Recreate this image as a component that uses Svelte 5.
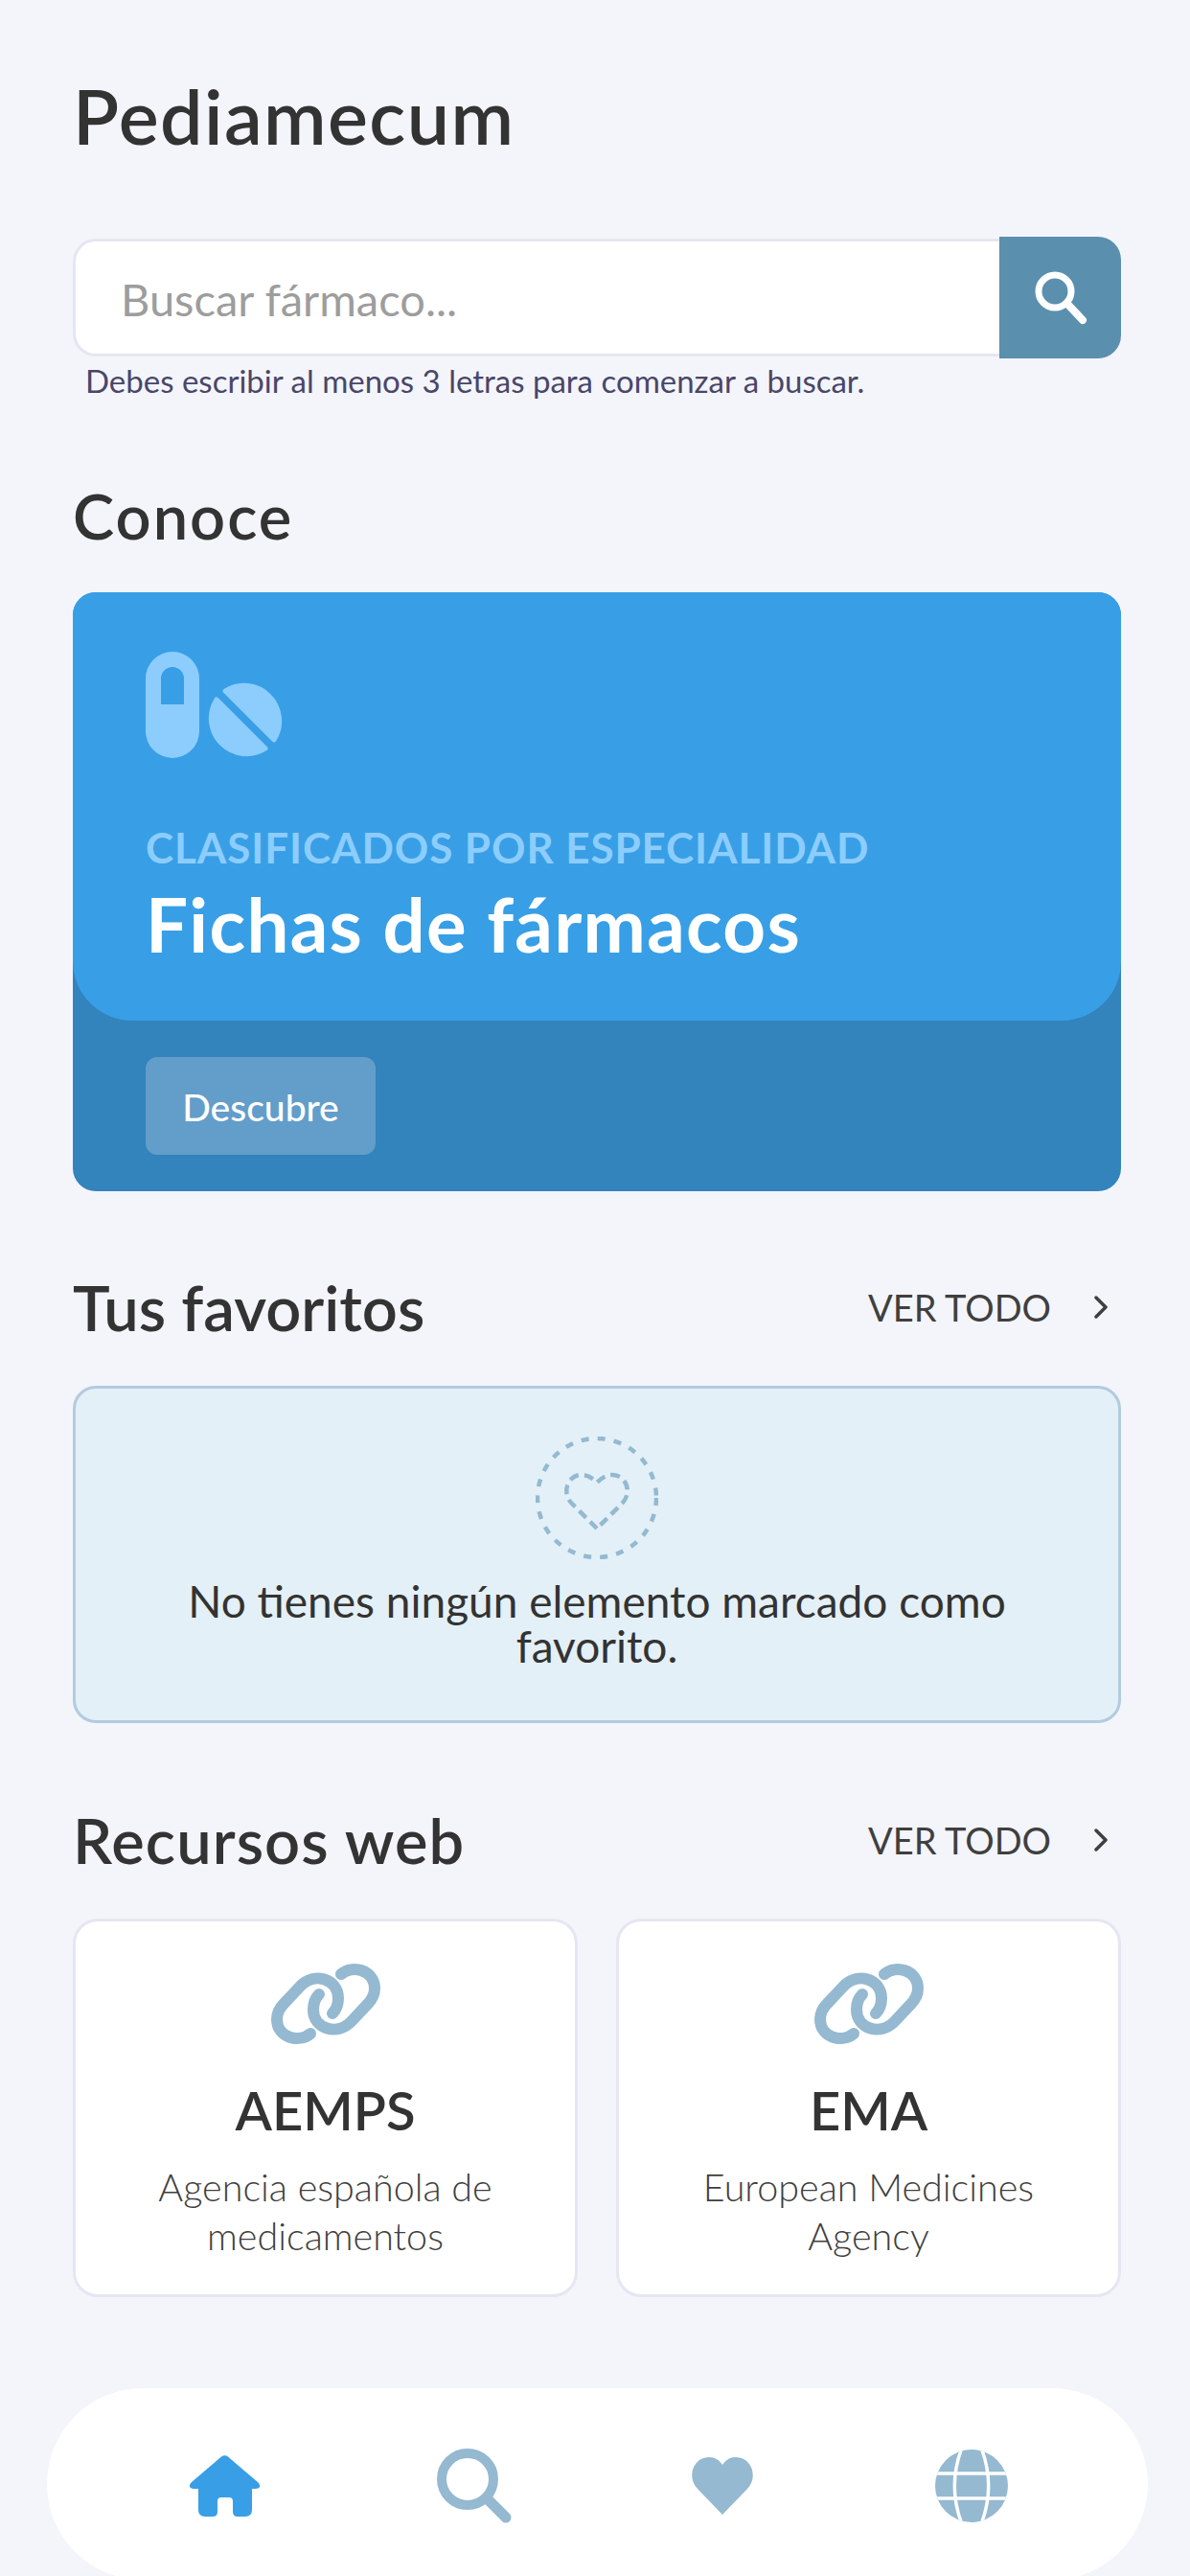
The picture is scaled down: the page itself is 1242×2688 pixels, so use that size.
<script>
    const resources = [
        { name: 'AEMPS', lines: ['Agencia española de', 'medicamentos'] },
        { name: 'EMA', lines: ['European Medicines', 'Agency'] }
    ];
</script>

<style>
    :global(body) {
        margin: 0;
        background: #f3f5fb;
        overflow: hidden;
    }

    .page {
        width: 1242px;
        height: 2688px;
        overflow: hidden;
        box-sizing: border-box;
        padding: 0 72px 0 76px;
        font-family: Lato, "Open Sans", sans-serif;
        color: #333;
    }

    h1, h2, p {
        margin: 0;
        font-weight: 500;
    }

    h1 {
        font-size: 79px;
        line-height: 90px;
        padding-top: 76px;
        font-weight: 600;
        letter-spacing: 1.4px;
    }

    .search {
        display: flex;
        height: 127px;
        margin-top: 81px;
    }

    .search input {
        flex: 1;
        min-width: 0;
        box-sizing: border-box;
        height: 123px;
        margin-top: 2px;
        padding: 3px 0 0 47px;
        border: 3px solid #e6e6f2;
        border-right: 0;
        border-radius: 24px 0 0 24px;
        background: #fff;
        font: 400 47px/1 Lato, sans-serif;
        outline: none;
    }

    .search input::placeholder {
        color: #9d9d9d;
        opacity: 1;
    }

    .search button {
        width: 127px;
        border: 0;
        padding: 0;
        background: #5b8fae;
        border-radius: 0 24px 24px 0;
        display: flex;
        align-items: center;
        justify-content: center;
    }

    .hint {
        font-size: 33px;
        line-height: 40px;
        margin: 3px 0 0 13px;
        color: #4a4668;
        font-weight: 400;
    }

    h2 {
        font-size: 65px;
        line-height: 70px;
        font-weight: 600;
    }

    .conoce {
        margin-top: 86px;
        letter-spacing: 2px;
    }

    .feature {
        margin-top: 45px;
        height: 625px;
        border-radius: 24px;
        background: #3383bc;
        overflow: hidden;
    }

    .feature-top {
        height: 447px;
        box-sizing: border-box;
        padding: 62px 76px 0;
        background: #389fe6;
        border-radius: 0 0 62px 62px;
    }

    .pills {
        display: block;
    }

    .kicker {
        margin-top: 65px;
        font-size: 44px;
        line-height: 56px;
        color: #8ccdfd;
        font-weight: 700;
        letter-spacing: 0.9px;
    }

    .feature-title {
        font-size: 78px;
        line-height: 86px;
        margin-top: 9px;
        color: #fff;
        font-weight: 700;
        letter-spacing: 1.3px;
    }

    .cta {
        display: block;
        width: 240px;
        height: 102px;
        margin: 38px 0 0 76px;
        border: 0;
        border-radius: 12px;
        background: #639dc9;
        color: #fff;
        font: 500 39px/102px Lato, sans-serif;
    }

    .section-head {
        display: flex;
        align-items: center;
        justify-content: space-between;
        height: 70px;
    }

    .web-title {
        letter-spacing: 1.1px;
    }

    .more {
        display: flex;
        align-items: center;
        gap: 45px;
        padding-right: 14px;
        font-size: 38px;
        color: #3f3f3f;
    }

    .favs-head {
        margin-top: 86px;
    }

    .favs {
        margin-top: 47px;
        height: 352px;
        box-sizing: border-box;
        border: 3px solid #b2cbdf;
        border-radius: 24px;
        background: #e4f0f7;
        padding-top: 50px;
        text-align: center;
    }

    .favs svg {
        display: block;
        margin: 0 auto;
    }

    .favs p {
        margin-top: 20px;
        padding: 0 100px;
        font-size: 46px;
        line-height: 47px;
        font-weight: 400;
        color: #333;
    }

    .web-head {
        margin-top: 87px;
    }

    .resources {
        display: grid;
        grid-template-columns: 1fr 1fr;
        gap: 40px;
        margin-top: 47px;
    }

    .resource {
        height: 395px;
        box-sizing: border-box;
        border: 3px solid #e6e6f2;
        border-radius: 26px;
        background: #fff;
        padding-top: 42px;
        text-align: center;
    }

    .resource svg {
        display: block;
        margin: 0 auto;
    }

    .resource h3 {
        margin: 32px 0 0;
        font-size: 56px;
        line-height: 70px;
        font-weight: 600;
    }

    .resource p {
        margin-top: 19px;
        font-size: 39.5px;
        line-height: 51px;
        font-weight: 300;
        color: #3f3f3f;
    }

    .nav {
        display: flex;
        justify-content: space-between;
        align-items: center;
        height: 200px;
        margin: 95px -28px 0 -27px;
        padding: 4px 144px 0 146px;
        box-sizing: border-box;
        border-radius: 100px;
        background: #fff;
    }

    .nav-item {
        width: 80px;
        display: flex;
        justify-content: center;
    }
</style>

<div class="page">
    <h1>Pediamecum</h1>

    <div class="search">
        <input type="text" placeholder="Buscar fármaco..." />
        <button aria-label="Buscar">
            <svg width="56" height="56" viewBox="0 0 56 56" fill="none" stroke="#fff" stroke-linecap="round">
                <circle cx="22" cy="21" r="17" stroke-width="7" />
                <path d="M35 34 L51 51" stroke-width="8" />
            </svg>
        </button>
    </div>
    <p class="hint">Debes escribir al menos 3 letras para comenzar a buscar.</p>

    <h2 class="conoce">Conoce</h2>
    <div class="feature">
        <div class="feature-top">
            <svg class="pills" width="146" height="111" viewBox="0 0 146 111">
                <path fill="#8ccdfd" fill-rule="evenodd" d="M28 0 A28 28 0 0 1 56 28 V83 A28 28 0 0 1 0 83 V28 A28 28 0 0 1 28 0 Z M28 16 A12 12 0 0 0 16 28 V55 H40 V28 A12 12 0 0 0 28 16 Z" />
                <g transform="translate(104 71)" fill="#8ccdfd" stroke="#8ccdfd" stroke-width="5" stroke-linejoin="round">
                    <path d="M-21 -30 A37 37 0 0 1 30 21 Z" />
                    <path d="M21 30 A37 37 0 0 1 -30 -21 Z" />
                </g>
            </svg>
            <div class="kicker">CLASIFICADOS POR ESPECIALIDAD</div>
            <div class="feature-title">Fichas de fármacos</div>
        </div>
        <button class="cta">Descubre</button>
    </div>

    <div class="section-head favs-head">
        <h2>Tus favoritos</h2>
        <span class="more">VER TODO
            <svg width="14" height="24" viewBox="0 0 14 24" fill="none" stroke="#3f3f3f" stroke-width="3.5" stroke-linecap="round" stroke-linejoin="round"><path d="M2 2 L12 12 L2 22" /></svg>
        </span>
    </div>
    <div class="favs">
        <svg width="128" height="128" viewBox="0 0 128 128" fill="none" stroke="#94b9d1" stroke-width="4.5">
            <circle cx="64" cy="64" r="62" stroke-dasharray="8 9.2" />
            <path d="M64 96 L38 70 C26 58 34 40 48 40 C55 40 60 44 64 48 C68 44 73 40 80 40 C94 40 102 58 90 70 Z" stroke-dasharray="10 6" />
        </svg>
        <p>No tienes ningún elemento marcado como favorito.</p>
    </div>

    <div class="section-head web-head">
        <h2 class="web-title">Recursos web</h2>
        <span class="more">VER TODO
            <svg width="14" height="24" viewBox="0 0 14 24" fill="none" stroke="#3f3f3f" stroke-width="3.5" stroke-linecap="round" stroke-linejoin="round"><path d="M2 2 L12 12 L2 22" /></svg>
        </span>
    </div>
    <div class="resources">
        {#each resources as r}
            <div class="resource">
                <svg width="114" height="88" viewBox="0 0 114 88" fill="none" stroke="#94b9d1" stroke-width="12" stroke-linecap="round">
                    <path d="M41 75 C30 85 6 80 6 60 C6 52 10 47 14 43 L30 26 C45 10 70 18 70 38 C70 44 68 50 64 54" />
                    <path transform="rotate(180 57 44)" d="M41 75 C30 85 6 80 6 60 C6 52 10 47 14 43 L30 26 C45 10 70 18 70 38 C70 44 68 50 64 54" />
                </svg>
                <h3>{r.name}</h3>
                <p>{r.lines[0]}<br />{r.lines[1]}</p>
            </div>
        {/each}
    </div>

    <nav class="nav">
        <span class="nav-item">
            <svg width="74" height="64" viewBox="0 0 74 64">
                <path fill="#389fe6" d="M33 1.5 Q36.5 -1 40 1.5 L71 28 Q75 32 72 34 Q71 35 68 35 H65 V57 Q65 64 58 64 H50 Q45 64 45 59 V48 Q45 44 41 44 H33 Q29 44 29 48 V59 Q29 64 24 64 H16 Q9 64 9 57 V35 H5 Q2 35 1 34 Q-2 32 2 28 Z" />
            </svg>
        </span>
        <span class="nav-item">
            <svg width="78" height="78" viewBox="0 0 78 78" fill="none" stroke="#94b9d1" stroke-linecap="round">
                <circle cx="32" cy="32" r="27" stroke-width="10" />
                <path d="M52 52 L72 72" stroke-width="11" />
            </svg>
        </span>
        <span class="nav-item">
            <svg width="64" height="60" viewBox="0 0 64 60">
                <path fill="#94b9d1" d="M32 60 L6 33 C-6 20 2 0 18 0 C24 0 29 3 32 8 C35 3 40 0 46 0 C62 0 70 20 58 33 Z" />
            </svg>
        </span>
        <span class="nav-item">
            <svg width="76" height="76" viewBox="0 0 76 76">
                <defs>
                    <clipPath id="globe"><circle cx="38" cy="38" r="38" /></clipPath>
                </defs>
                <g clip-path="url(#globe)">
                    <rect width="76" height="76" fill="#94b9d1" />
                    <g fill="none" stroke="#fff" stroke-width="3.5">
                        <path d="M0 25 H76 M0 51 H76" />
                        <path d="M28 -2 C18 24 18 52 28 78 M48 -2 C58 24 58 52 48 78" />
                    </g>
                </g>
            </svg>
        </span>
    </nav>
</div>
